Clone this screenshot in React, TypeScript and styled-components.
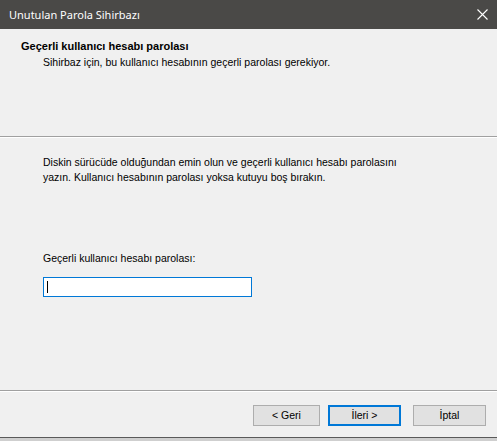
import styled, { createGlobalStyle } from 'styled-components'

const GlobalStyle = createGlobalStyle`
  html, body {
    margin: 0;
    padding: 0;
    background: #f0f0f0;
  }

  * {
    box-sizing: border-box;
  }
`

const App = () => {
  return (
    <Window>
      <GlobalStyle />

      <TitleBar>
        <Title>Unutulan Parola Sihirbazı</Title>
        <CloseButton aria-label="Kapat">
          <svg width="11" height="11" viewBox="0 0 11 11">
            <path d="M0.5 0.5 L10.5 10.5 M10.5 0.5 L0.5 10.5" stroke="#ffffff" strokeWidth="1.1" />
          </svg>
        </CloseButton>
      </TitleBar>

      <Header>
        <HeaderTitle>Geçerli kullanıcı hesabı parolası</HeaderTitle>
        <HeaderSubtitle>Sihirbaz için, bu kullanıcı hesabının geçerli parolası gerekiyor.</HeaderSubtitle>
      </Header>

      <Divider />

      <Body>
        <Paragraph>
          Diskin sürücüde olduğundan emin olun ve geçerli kullanıcı hesabı parolasını
          <br />
          yazın. Kullanıcı hesabının parolası yoksa kutuyu boş bırakın.
        </Paragraph>

        <FieldLabel htmlFor="password">Geçerli kullanıcı hesabı parolası:</FieldLabel>
        <PasswordBox>
          <Caret />
        </PasswordBox>
      </Body>

      <Divider />

      <Footer>
        <Button $width={67}>&lt; Geri</Button>
        <Button $width={73} $primary>İleri &gt;</Button>
        <Button $width={73} $spaced>İptal</Button>
      </Footer>

      <BottomEdge />
    </Window>
  )
}

export default App

const Window = styled('div')`
  width: 497px;
  height: 441px;
  display: flex;
  flex-direction: column;
  background: #f0f0f0;
  font-family: 'Liberation Sans', Arial, sans-serif;
  font-size: 10.5px;
  color: #000000;
  overflow: hidden;
`

const TitleBar = styled('div')`
  height: 29px;
  flex-shrink: 0;
  display: flex;
  align-items: center;
  justify-content: space-between;
  background: #4a4947;
  padding-left: 9px;
`

const Title = styled('span')`
  font-family: 'Noto Sans', 'Open Sans', sans-serif;
  font-size: 11px;
  color: #ffffff;
`

const CloseButton = styled('div')`
  width: 30px;
  height: 29px;
  display: flex;
  align-items: center;
  justify-content: center;
`

const Header = styled('div')`
  height: 107px;
  flex-shrink: 0;
  padding: 11px 0 0 21px;
`

const HeaderTitle = styled('div')`
  font-size: 11px;
  font-weight: bold;
  line-height: 13px;
`

const HeaderSubtitle = styled('div')`
  margin-top: 3px;
  padding-left: 22px;
  line-height: 13px;
`

const Divider = styled('div')`
  height: 2px;
  flex-shrink: 0;
  border-top: 1px solid #a0a0a0;
  border-bottom: 1px solid #ffffff;
`

const Body = styled('div')`
  flex: 1;
  display: flex;
  flex-direction: column;
  align-items: flex-start;
  padding: 17px 0 0 43px;
`

const Paragraph = styled('p')`
  margin: 0;
  line-height: 15px;
`

const FieldLabel = styled('label')`
  margin-top: 67px;
  line-height: 13px;
`

const PasswordBox = styled('div')`
  margin-top: 12px;
  width: 209px;
  height: 20px;
  background: #ffffff;
  border: 1px solid #0078d7;
  display: flex;
  align-items: center;
  padding-left: 3px;
`

const Caret = styled('span')`
  width: 1px;
  height: 12px;
  background: #000000;
`

const Footer = styled('div')`
  height: 45px;
  flex-shrink: 0;
  display: flex;
  justify-content: flex-end;
  align-items: flex-start;
  padding: 13px 11px 0 0;
`

const Button = styled('div')<{ $width: number; $primary?: boolean; $spaced?: boolean }>`
  width: ${({ $width }) => $width}px;
  height: 21px;
  margin-left: ${({ $primary, $spaced }) => ($spaced ? '12px' : $primary ? '8px' : '0')};
  display: flex;
  align-items: center;
  justify-content: center;
  background: #e1e1e1;
  border: ${({ $primary }) => ($primary ? '2px solid #0078d7' : '1px solid #adadad')};
  line-height: 13px;
`

const BottomEdge = styled('div')`
  height: 4px;
  flex-shrink: 0;
  border-top: 1px solid #5a5a5a;
  background: #cfcfcf;
`
